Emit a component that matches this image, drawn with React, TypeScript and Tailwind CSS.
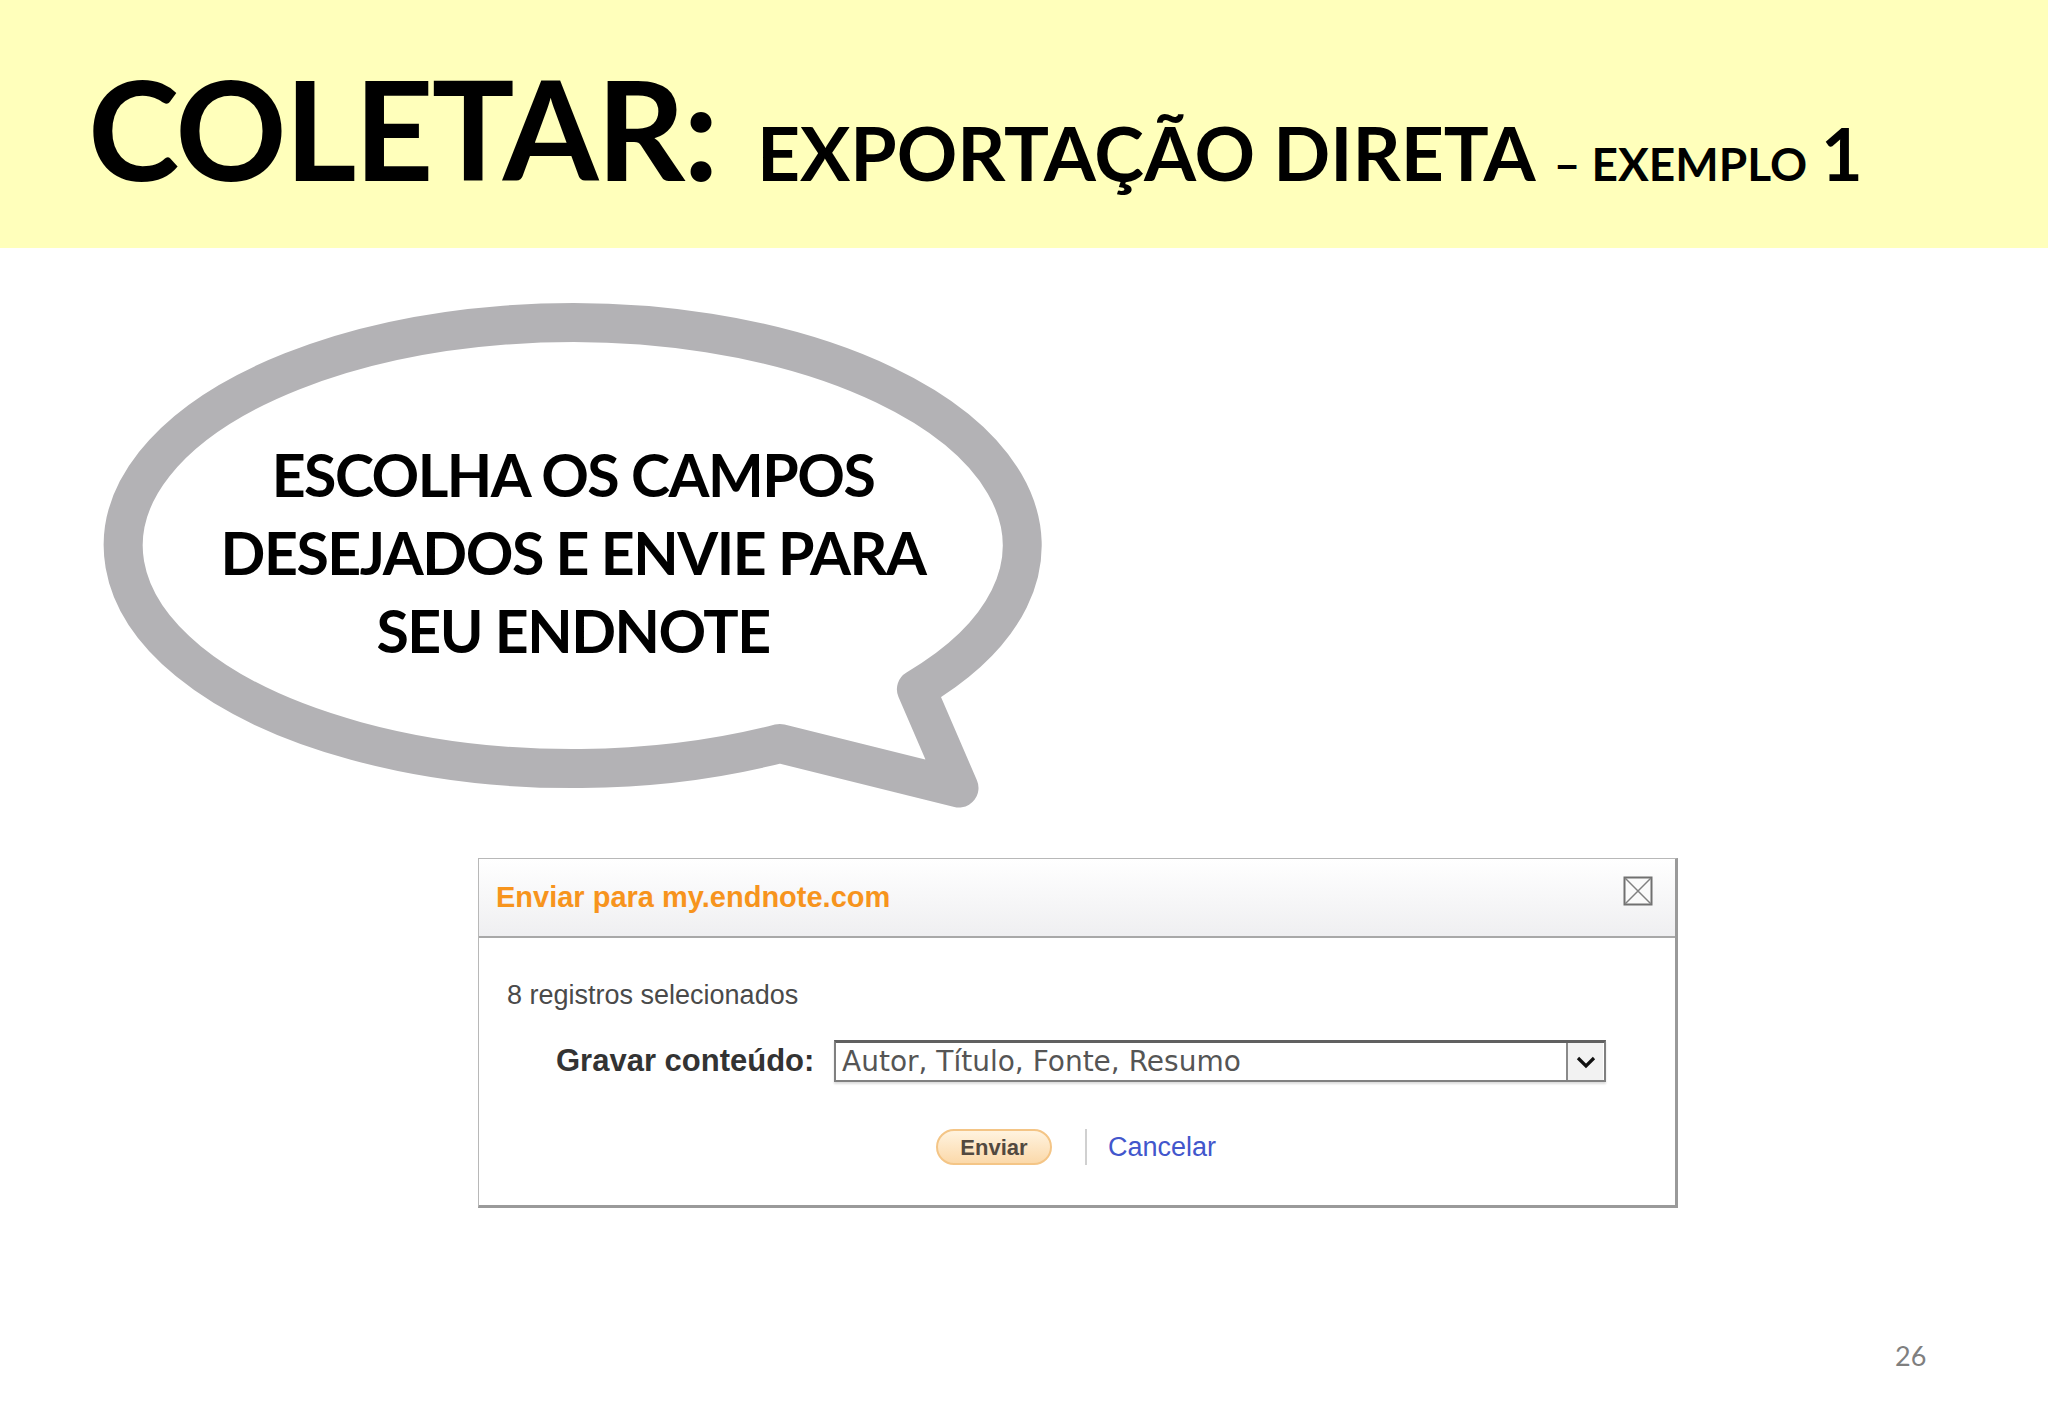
import React from 'react';

const calibri = { fontFamily: 'Lato, "Open Sans", sans-serif' };
const arial = { fontFamily: '"Liberation Sans", Arial, sans-serif' };

function Bubble() {
    return (
        <div className="relative ml-[84px] mt-[35px] h-[540px] w-[1000px]">
            {/* speech bubble outline */}
            <svg className="absolute left-0 top-0 h-[540px] w-[1000px] overflow-visible" viewBox="0 0 1000 540">
                <path
                    d="M 832.4 406.3 A 449.5 223 0 1 0 695.8 460.5 L 875 505 Z"
                    fill="#ffffff"
                    stroke="#b3b2b5"
                    strokeWidth="39"
                    strokeLinejoin="round"
                />
            </svg>
            <div
                className="relative flex h-[524px] w-[978px] flex-col items-center justify-center pt-[16px] text-center text-[59px] font-bold leading-[78px] tracking-[-1.5px] text-black"
                style={calibri}
            >
                <div>ESCOLHA OS CAMPOS</div>
                <div>DESEJADOS E ENVIE PARA</div>
                <div>SEU ENDNOTE</div>
            </div>
        </div>
    );
}

function Dialog() {
    return (
        <div className="ml-[478px] mt-[35px] w-[1200px] border border-[#b8b8b8] border-r-[3px] border-b-[3px] border-r-[#9a9a9a] border-b-[#9a9a9a] bg-white">
            {/* title bar */}
            <div className="flex h-[79px] items-center justify-between border-b-2 border-[#a8a8a8] bg-gradient-to-b from-white to-[#efeff1] pl-[17px] pr-[22px]">
                <span className="text-[29px] font-bold text-[#f7941d]" style={arial}>
                    Enviar para my.endnote.com
                </span>
                <svg className="mb-[14px]" width="30" height="30" viewBox="0 0 30 30">
                    <rect x="1.5" y="1.5" width="27" height="27" fill="#fafafa" stroke="#707070" strokeWidth="2" />
                    <path d="M2 2 L28 28 M28 2 L2 28" stroke="#808080" strokeWidth="1.5" />
                </svg>
            </div>

            {/* body */}
            <div className="pb-[40px] pt-[39px]" style={arial}>
                <div className="flex h-[36px] items-center pl-[28px] text-[27px] text-[#4a4a4a]">8 registros selecionados</div>

                <div className="mt-[27px] flex h-[42px] items-center">
                    <span className="ml-[77px] w-[278px] text-[31px] font-bold text-[#333333]">Gravar conteúdo:</span>
                    <div className="flex h-[42px] w-[772px] items-center border-2 border-[#808080] border-t-[3px] border-t-[#606060] bg-white shadow-[0_2px_2px_#dcdcdc]">
                        <span
                            className="flex-1 pl-[6px] text-[28px] text-[#555555]"
                            style={{ fontFamily: '"DejaVu Sans", Verdana, sans-serif' }}
                        >
                            Autor, Título, Fonte, Resumo
                        </span>
                        <div className="mr-[1px] flex h-[37px] w-[37px] items-center justify-center border-l-2 border-[#8a8a8a] bg-[#f2f2f2]">
                            <svg width="22" height="14" viewBox="0 0 22 14">
                                <path d="M3 3 L11 11 L19 3" fill="none" stroke="#111111" strokeWidth="3.2" />
                            </svg>
                        </div>
                    </div>
                </div>

                <div className="mt-[47px] flex h-[36px] items-center">
                    <div className="ml-[457px] flex h-[36px] w-[116px] items-center justify-center rounded-full border-2 border-[#f4c586] bg-gradient-to-b from-[#fff3df] to-[#fbd9aa] text-[22px] font-bold text-[#52493f]">
                        Enviar
                    </div>
                    <div className="ml-[33px] h-[36px] w-[2px] bg-[#d0d0d0]" />
                    <span className="ml-[21px] text-[27px] text-[#4256cc]">Cancelar</span>
                </div>
            </div>
        </div>
    );
}

export default function App() {
    return (
        <div className="relative h-[1418px] w-[2048px] overflow-hidden bg-white">
            {/* Title band */}
            <div className="flex h-[248px] items-baseline bg-[#ffffbb] pl-[88px] pt-[59px] text-black" style={calibri}>
                <span className="text-[138px] font-bold leading-none tracking-[-2px]">COLETAR:</span>
                <span className="ml-[40px] text-[75px] font-bold leading-none">EXPORTAÇÃO DIRETA</span>
                <span className="ml-[18px] text-[46px] font-bold leading-none">– EXEMPLO</span>
                <span className="ml-[14px] text-[72px] font-bold leading-none">1</span>
            </div>

            <Bubble />
            <Dialog />

            <div className="absolute left-[1895px] top-[1336px] text-[27px] text-[#7f7f7f]" style={calibri}>
                26
            </div>
        </div>
    );
}
